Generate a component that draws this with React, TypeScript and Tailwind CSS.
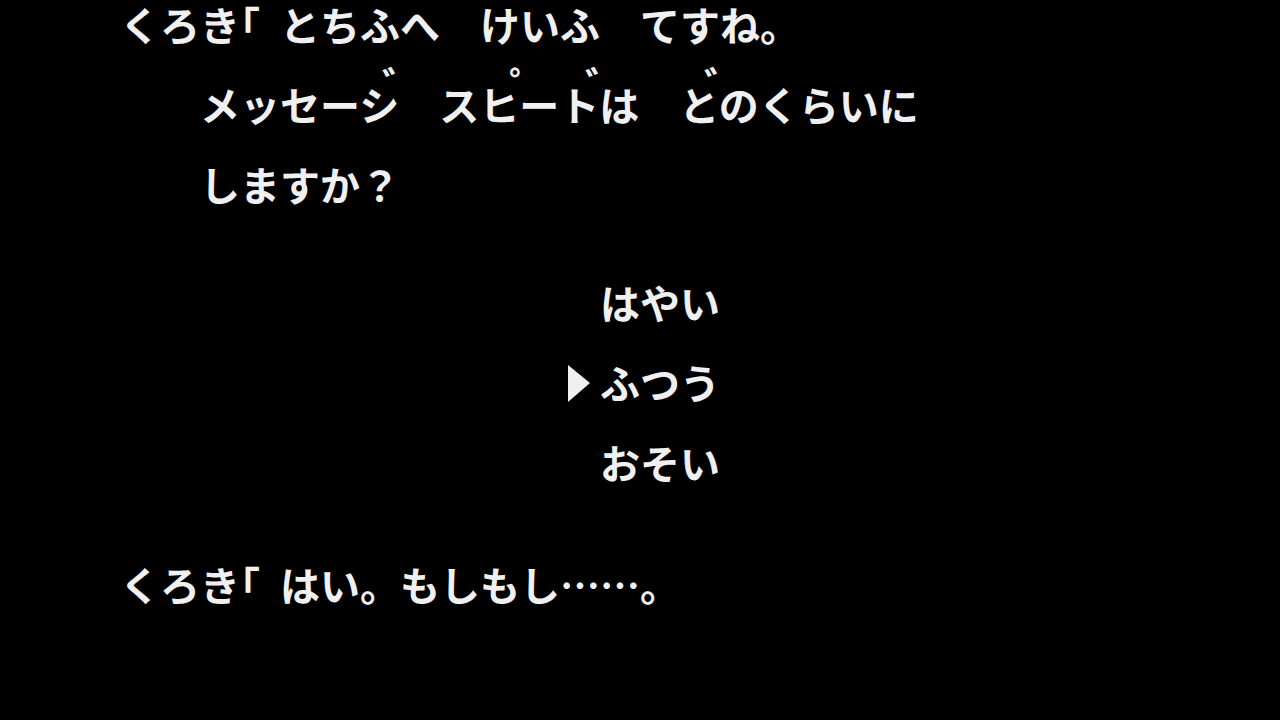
import React from "react";

const Row = ({ children, className = "" }: { children: React.ReactNode; className?: string }) => (
  <div className={`h-[40px] leading-[40px] whitespace-pre ${className}`}>{children}</div>
);

const Br = () => <span className="inline-block w-[40px] -indent-[20px]">「</span>;

const marks: { x: number; m: string }[] = [
  { x: 182, m: "゛" },
  { x: 309, m: "゜" },
  { x: 385, m: "゛" },
  { x: 504, m: "゛" },
];

export default function App() {
  return (
    <div
      className="w-[1280px] h-[720px] bg-black text-[#f0f0f0] overflow-hidden text-[40px] font-bold"
      style={{ fontFamily: '"Noto Sans CJK JP", "Noto Sans", sans-serif' }}
    >
      <div className="flex flex-col pt-[4px]">
        <Row className="pl-[120px]">
          {"くろき"}
          <Br />
          {"とちふへ　けいふ　てすね。"}
        </Row>
        <div className="h-[40px] ml-[200px] relative">
          {marks.map((k, i) => (
            <span
              key={i}
              className="absolute top-[36px] leading-[8px]"
              style={{ left: k.x }}
            >
              {k.m}
            </span>
          ))}
        </div>
        <Row className="pl-[200px]">{"メッセーシ　スヒートは　とのくらいに"}</Row>
        <Row className="pl-[200px] mt-[40px]">{"しますか？"}</Row>
        <div className="flex flex-col gap-[40px] mt-[78px] pl-[560px]">
          <div className="flex h-[40px]">
            <div className="w-[40px]" />
            <Row>{"はやい"}</Row>
          </div>
          <div className="flex h-[40px]">
            <div className="w-[40px] flex items-center">
              <svg width="40" height="40" viewBox="0 0 40 40">
                <polygon points="8,3 30,21 8,40" fill="#f0f0f0" />
              </svg>
            </div>
            <Row>{"ふつう"}</Row>
          </div>
          <div className="flex h-[40px]">
            <div className="w-[40px]" />
            <Row>{"おそい"}</Row>
          </div>
        </div>
        <Row className="pl-[120px] mt-[82px]">
          {"くろき"}
          <Br />
          {"はい。もしもし……。"}
        </Row>
      </div>
    </div>
  );
}
